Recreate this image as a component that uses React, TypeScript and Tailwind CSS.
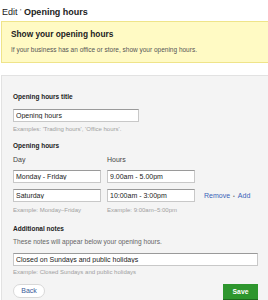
import React from "react";

function TextInput({ value, className }: { value: string; className: string }) {
  return (
    <input
      readOnly
      value={value}
      className={`h-[13px] border border-[#c8c8c8] border-t-[#9a9a9a] bg-white pl-[2px] text-[7px] leading-[11px] text-[#222] outline-none ${className}`}
    />
  );
}

export default function App() {
  return (
    <div className="min-h-[300px] bg-white font-['Liberation_Sans',Arial,sans-serif] text-[#222]">
      <div className="pl-[2px] pt-[6px] text-[9px] leading-[12px]">
        Edit <span className="text-[7px] align-top">'</span>{" "}
        <span className="font-bold">Opening hours</span>
      </div>

      <div className="ml-[1px] mt-[3px] border border-r-0 border-[#efe48a] bg-[#fffac4] pl-[9px] pt-[7px] pb-[8px]">
        <div className="text-[8.3px] font-bold leading-[10px]">Show your opening hours</div>
        <div className="mt-[7px] text-[6.5px] leading-[8px] text-[#555]">
          If your business has an office or store, show your opening hours.
        </div>
      </div>

      <div className="ml-[1px] mt-[12px] border border-r-0 border-[#e2e2e2] bg-[#f4f4f4] pl-[11px] pr-[10px] pt-[17px] pb-[10px]">
        <div className="text-[6.5px] font-bold leading-[8px]">Opening hours title</div>
        <TextInput value="Opening hours" className="mt-[4px] w-[126px]" />
        <div className="mt-[1px] text-[6px] leading-[7px] text-[#a0a0a0]">
          Examples: 'Trading hours', 'Office hours'.
        </div>

        <div className="mt-[9px] text-[6.5px] font-bold leading-[8px]">Opening hours</div>
        <div className="mt-[6px] flex text-[7px] leading-[8px] text-[#444]">
          <div className="w-[94px]">Day</div>
          <div>Hours</div>
        </div>

        <div className="mt-[6px] flex items-center">
          <TextInput value="Monday - Friday" className="w-[88px]" />
          <TextInput value="9.00am - 5.00pm" className="ml-[6px] w-[88px]" />
        </div>
        <div className="mt-[6px] flex items-center">
          <TextInput value="Saturday" className="w-[88px]" />
          <TextInput value="10:00am - 3:00pm" className="ml-[6px] w-[88px]" />
          <div className="ml-[9px] flex items-center text-[7px] leading-[8px] text-[#3a62b8]">
            <span>Remove</span>
            <span className="mx-[3px] text-[5px] text-[#777]">•</span>
            <span>Add</span>
          </div>
        </div>
        <div className="mt-[5px] flex text-[6px] leading-[7px] text-[#a0a0a0]">
          <div className="w-[94px]">Example: Monday–Friday</div>
          <div>Example: 9:00am–5:00pm</div>
        </div>

        <div className="mt-[11px] text-[6.5px] font-bold leading-[8px]">Additional notes</div>
        <div className="mt-[5px] text-[6.6px] leading-[7px] text-[#666]">
          These notes will appear below your opening hours.
        </div>
        <TextInput value="Closed on Sundays and public holidays" className="mt-[4px] w-full" />
        <div className="text-[6px] leading-[7px] text-[#a0a0a0]">
          Example: Closed Sundays and public holidays
        </div>

        <div className="mt-[8px] flex items-start justify-between">
          <button className="h-[14px] w-[32px] rounded-full border border-[#d8d8d8] bg-white text-[7px] leading-[12px] text-[#3a5a9a]">
            Back
          </button>
          <button className="h-[17px] w-[35px] border-b-2 border-[#1d6a1d] bg-[#2e962e] text-[6.8px] font-bold leading-[15px] text-white">
            Save
          </button>
        </div>
      </div>
    </div>
  );
}
